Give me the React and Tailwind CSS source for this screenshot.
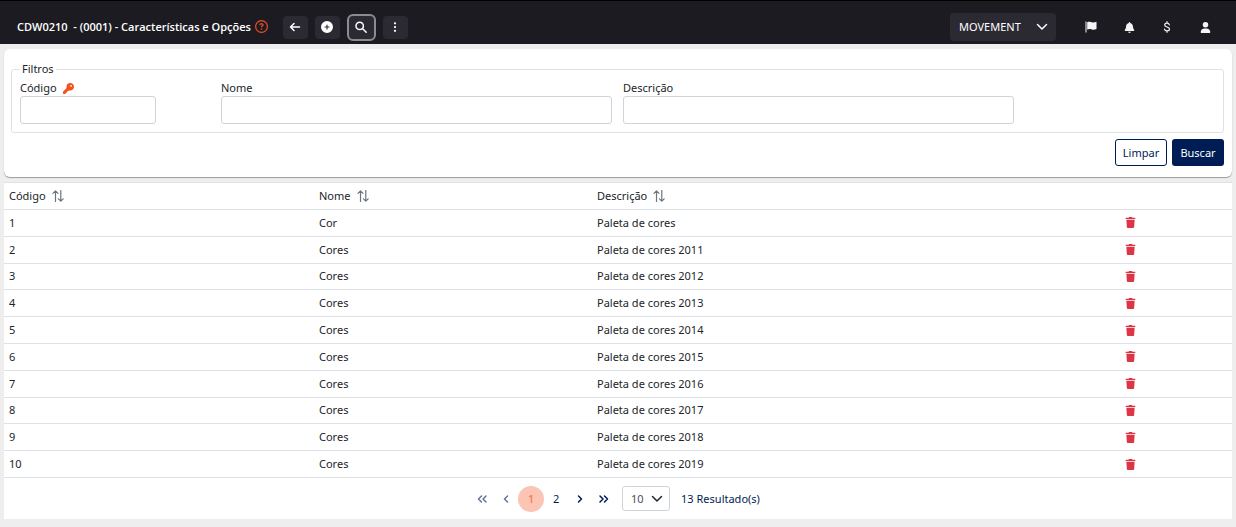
import React from 'react';
import { FaKey, FaBell, FaUser, FaCirclePlus, FaRegCircleQuestion } from 'react-icons/fa6';
import { FaTrash } from 'react-icons/fa';
import { BsThreeDotsVertical } from 'react-icons/bs';

const rows = [
  { id: 1, nome: 'Cor', descricao: 'Paleta de cores' },
  { id: 2, nome: 'Cores', descricao: 'Paleta de cores 2011' },
  { id: 3, nome: 'Cores', descricao: 'Paleta de cores 2012' },
  { id: 4, nome: 'Cores', descricao: 'Paleta de cores 2013' },
  { id: 5, nome: 'Cores', descricao: 'Paleta de cores 2014' },
  { id: 6, nome: 'Cores', descricao: 'Paleta de cores 2015' },
  { id: 7, nome: 'Cores', descricao: 'Paleta de cores 2016' },
  { id: 8, nome: 'Cores', descricao: 'Paleta de cores 2017' },
  { id: 9, nome: 'Cores', descricao: 'Paleta de cores 2018' },
  { id: 10, nome: 'Cores', descricao: 'Paleta de cores 2019' },
];

// Stroke icon drawn on a 12x12 grid
const Icon = ({ d, size = 12, width = 1.5, className = '' }) => (
  <svg
    viewBox="0 0 12 12"
    width={size}
    height={size}
    fill="none"
    stroke="currentColor"
    strokeWidth={width}
    strokeLinecap="round"
    strokeLinejoin="round"
    className={className}
    aria-hidden="true"
  >
    <path d={d} />
  </svg>
);

const FlagIcon = () => (
  <svg viewBox="0 0 12 12" width={12} height={12} fill="currentColor" aria-hidden="true">
    <path d="M0.5 0.5H1.5V11.5H0.5zM2.2 1.2C4.2 0.4 5.2 0.6 6.8 1.2C8.4 1.8 9.6 1.5 11.5 0.8V8C9.6 8.8 8.4 9 6.8 8.4C5.2 7.8 4.2 7.8 2.2 8.6z" />
  </svg>
);

const HeaderButton = ({ label, active, children }) => (
  <button
    aria-label={label}
    className={
      active
        ? 'flex h-[27px] w-[29px] items-center justify-center rounded-md border-2 border-[#8b8b90] bg-[#2b2a33]'
        : 'flex h-[23px] w-[25px] items-center justify-center rounded bg-[#2b2a33]'
    }
  >
    {children}
  </button>
);

const Header = () => (
  <header className="flex h-11 items-center justify-between border-t border-black bg-[#1c1b22] pt-[9px] text-white">
    <div className="flex items-center pl-[17px]">
      <h1 className="font-['Open_Sans','Noto_Sans',sans-serif] text-[11px] font-semibold whitespace-pre">
        CDW0210  - (0001) - Características e Opções
      </h1>
      <FaRegCircleQuestion className="mr-[15px] mb-0.5 ml-1 text-[#f04e23]" size={13} />
      <div className="flex items-center gap-[7px]">
        <HeaderButton label="Voltar">
          <Icon d="M10.5 6H1.5M5 2.5L1.5 6L5 9.5" />
        </HeaderButton>
        <HeaderButton label="Adicionar">
          <FaCirclePlus size={12} />
        </HeaderButton>
        <HeaderButton label="Pesquisar" active>
          <Icon d="M8.4 4.9A3.7 3.7 0 1 1 1 4.9A3.7 3.7 0 1 1 8.4 4.9M7.5 7.5L11.2 11.2" width={1.5} />
        </HeaderButton>
        <HeaderButton label="Mais opções">
          <BsThreeDotsVertical size={12} />
        </HeaderButton>
      </div>
    </div>
    <div className="flex items-center pr-[25px]">
      <button className="mr-[29px] flex h-7 w-[106px] items-center justify-between rounded bg-[#2b2a33] pr-2 pl-[9px] text-[11px]">
        MOVEMENT
        <Icon d="M1.5 3.5L6 8L10.5 3.5" />
      </button>
      <div className="flex items-center gap-[26px] text-[#f5f5f5]">
        <button aria-label="Marcadores" className="flex w-3 justify-center"><FlagIcon /></button>
        <button aria-label="Notificações" className="flex w-3 justify-center"><FaBell size={11} /></button>
        <button aria-label="Moedas" className="flex w-3 justify-center">
          <Icon d="M8.3 3.8C8 2.7 7.2 2.1 6 2.1C4.6 2.1 3.7 2.8 3.7 4C3.7 6.5 8.5 5.4 8.5 8C8.5 9.3 7.4 9.9 6 9.9C4.6 9.9 3.7 9.3 3.5 8.1M6 0.7V2M6 10V11.3" width={1.2} />
        </button>
        <button aria-label="Usuário" className="flex w-3 justify-center"><FaUser size={11} /></button>
      </div>
    </div>
  </header>
);

const Field = ({ id, label, icon, className, inputClassName }) => (
  <div className={className}>
    <label htmlFor={id} className="flex h-4 items-center gap-[6px]">
      {label}
      {icon}
    </label>
    <input id={id} type="text" className={`block h-7 rounded-[3px] border border-[#ced4da] bg-white px-2 ${inputClassName}`} />
  </div>
);

const Filters = () => (
  <form className="rounded-md bg-white pt-3 pr-2 pb-[11px] pl-[7px] shadow-[0_1px_1px_rgba(0,0,0,0.35)]" onSubmit={(e) => e.preventDefault()}>
    <fieldset className="rounded-[3px] border border-[#dee2e6] px-2 pt-[3px] pb-2">
      <legend className="px-[2px] leading-4">Filtros</legend>
      <div className="grid grid-cols-12 gap-[11px]">
        <Field
          id="codigo"
          label="Código"
          icon={<FaKey className="text-[#f4511e]" size={11} />}
          className="col-span-2"
          inputClassName="w-[136px]"
        />
        <Field id="nome" label="Nome" className="col-span-4" inputClassName="w-full" />
        <Field id="descricao" label="Descrição" className="col-span-4" inputClassName="w-full" />
      </div>
    </fieldset>
    <div className="mt-[6px] flex justify-end gap-[5px]">
      <button type="reset" className="h-[27px] w-[52px] rounded-[3px] border border-[#001c54] bg-white text-[#001c54]">Limpar</button>
      <button type="submit" className="h-[27px] w-[52px] rounded-[3px] bg-[#001c54] text-white">Buscar</button>
    </div>
  </form>
);

const SortableHeader = ({ children, className }) => (
  <th className={`px-[5px] text-left font-normal ${className}`}>
    <button className="flex items-center gap-[6px]">
      {children}
      <Icon d="M3.5 11.5V0.8M1 3.3L3.5 0.8L6 3.3M8.8 0.5V11.2M6.5 8.8L8.8 11.2L11.2 8.8" width={1.2} className="text-[#6c757d]" />
    </button>
  </th>
);

const ResultTable = () => (
  <table className="h-[296px] w-full table-fixed border-collapse bg-white">
    <thead>
      <tr className="h-[27px] border-y border-[#dee2e6]">
        <SortableHeader className="w-[310px]">Código</SortableHeader>
        <SortableHeader className="w-[278px]">Nome</SortableHeader>
        <SortableHeader>Descrição</SortableHeader>
        <th className="w-[204px]" aria-label="Ações" />
      </tr>
    </thead>
    <tbody>
      {rows.map((row) => (
        <tr key={row.id} className="border-b border-[#dee2e6]">
          <td className="px-[5px]">{row.id}</td>
          <td className="px-[5px]">{row.nome}</td>
          <td className="px-[5px]">{row.descricao}</td>
          <td>
            <button aria-label={`Excluir ${row.id}`} className="mx-auto flex text-[#dc3545]">
              <FaTrash size={11} />
            </button>
          </td>
        </tr>
      ))}
    </tbody>
  </table>
);

const Paginator = () => (
  <nav className="flex h-[41px] items-center justify-center bg-white pr-[6px] text-[#001c54]" aria-label="Paginação">
    <button disabled aria-label="Primeira página" className="flex w-6 justify-center opacity-60">
      <Icon d="M5.5 3L2.5 6L5.5 9M10 3L7 6L10 9" />
    </button>
    <button disabled aria-label="Página anterior" className="flex w-6 justify-center opacity-60">
      <Icon d="M7.5 3L4.5 6L7.5 9" />
    </button>
    <button aria-current="page" className="h-[26px] w-[26px] rounded-full bg-[#fbc4b3] text-[#f26b43]">1</button>
    <button className="w-6">2</button>
    <button aria-label="Próxima página" className="flex w-6 justify-center">
      <Icon d="M4.5 3L7.5 6L4.5 9" />
    </button>
    <button aria-label="Última página" className="flex w-6 justify-center">
      <Icon d="M2 3L5 6L2 9M6.5 3L9.5 6L6.5 9" />
    </button>
    <div className="ml-[6px] grid items-center">
      <select
        aria-label="Linhas por página"
        className="col-start-1 row-start-1 h-[25px] w-12 appearance-none rounded-[3px] border border-[#ced4da] bg-white pl-2 text-[#495057]"
      >
        <option>10</option>
        <option>20</option>
        <option>50</option>
      </select>
      <Icon d="M1.5 3.5L6 8L10.5 3.5" className="pointer-events-none col-start-1 row-start-1 mr-[7px] justify-self-end text-[#212529]" />
    </div>
    <span className="ml-[11px]">13 Resultado(s)</span>
  </nav>
);

const App = () => (
  <div className="min-h-screen bg-[#eeeeee] font-['Noto_Sans','Open_Sans',sans-serif] text-[11px] leading-4 text-[#212529]">
    <Header />
    <main className="flex flex-col gap-[5px] px-1 pt-[5px] pb-2">
      <Filters />
      <section>
        <ResultTable />
        <Paginator />
      </section>
    </main>
  </div>
);

export default App;
